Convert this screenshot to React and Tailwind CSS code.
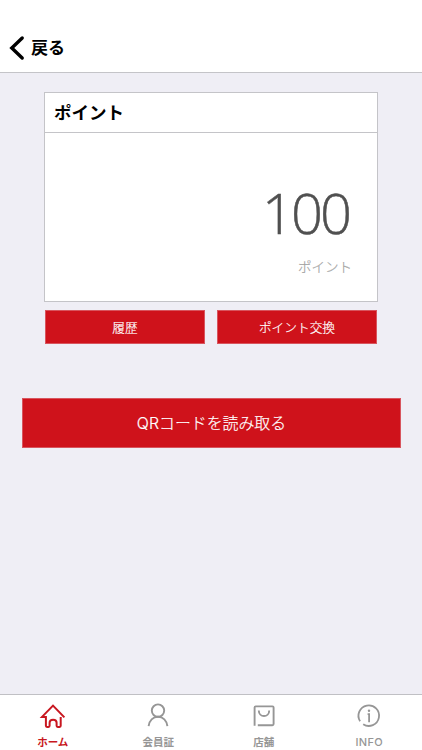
const tabs = [
  { label: "ホーム", Icon: HomeIcon, active: true },
  { label: "会員証", Icon: MemberIcon },
  { label: "店舗", Icon: ShopIcon },
  { label: "INFO", Icon: InfoIcon },
];

function HomeIcon() {
  return (
    <svg className="w-[28px] h-[28px]" viewBox="0 0 28 28" fill="none" stroke="currentColor" strokeWidth="2">
      <path d="M25.4 15.4L14 3.6L3 14.9H6.9V23.8Q6.9 24.9 8 24.9H9.5Q10.6 24.9 10.6 23.8V20.8C10.6 16.8 17.6 16.8 17.6 20.8V23.8Q17.6 24.9 18.7 24.9H20.6Q21.7 24.9 21.7 23.8V15" />
    </svg>
  );
}

function MemberIcon() {
  return (
    <svg className="w-[28px] h-[28px]" viewBox="0 0 28 28" fill="none" stroke="currentColor" strokeWidth="1.9">
      <circle cx="14" cy="8.6" r="6.2" />
      <path d="M4.6 24.2C5.2 18.5 9 14.8 14 14.8S22.8 18.5 23.4 24.2" />
    </svg>
  );
}

function ShopIcon() {
  return (
    <svg className="w-[28px] h-[28px]" viewBox="0 0 28 28" fill="none" stroke="currentColor" strokeWidth="1.9">
      <path d="M4.6 23.8V5.6Q4.6 4.4 5.8 4.4H22.4Q23.6 4.4 23.6 5.6V22Q23.6 23.2 22.4 23.2H7.8" />
      <path d="M8.8 8.4C8.8 15.9 19.2 15.9 19.2 8.4" />
    </svg>
  );
}

function InfoIcon() {
  return (
    <svg className="w-[28px] h-[28px]" viewBox="0 0 28 28" fill="none" stroke="currentColor" strokeWidth="1.8">
      <path d="M5.1 19.2A10.3 10.3 0 1 1 8.2 22.3" />
      <path d="M12.6 12.2H14.1V20.2" />
      <circle cx="14" cy="8.8" r="1.2" fill="currentColor" stroke="none" />
    </svg>
  );
}

function App() {
  return (
    <div className="w-full h-screen bg-[#efeef5] flex flex-col overflow-hidden font-['Inter','Noto_Sans_CJK_JP',sans-serif]">
      {/* Header */}
      <header className="h-[73px] shrink-0 bg-white border-b border-[#c4c4c8] flex items-end pl-[9px] pb-[11px]">
        <button className="flex items-center">
          <svg className="w-[16px] h-[26px]" viewBox="0 0 16 26" fill="none" stroke="#000" strokeWidth="3.4" strokeLinecap="round">
            <path d="M13.2 3L2.8 13L13.2 23" />
          </svg>
          <span className="ml-[6px] text-[17px] leading-[26px] font-bold text-black">戻る</span>
        </button>
      </header>

      <main className="flex-1 pt-[19px]">
        {/* Point card */}
        <section className="ml-[44px] w-[334px] h-[210px] bg-white border border-[#c4c4c8]">
          <h1 className="h-[40px] pl-[9px] border-b border-[#c4c4c8] text-[17.5px] leading-[40px] font-bold text-black">
            ポイント
          </h1>
          <div className="flex flex-col items-end pr-[25px] pt-[49px]">
            <p className="mr-[3px] font-['Open_Sans',sans-serif] font-light text-[56px] leading-[60px] tracking-[-3px] text-[#505050] [-webkit-text-stroke:0.5px_#505050]">
              100
            </p>
            <p className="mt-[15px] text-[13.5px] leading-[20px] text-[#a2a2a2] font-light [-webkit-text-stroke:0.2px]">ポイント</p>
          </div>
        </section>

        <div className="ml-[45px] mt-[8px] flex gap-[12px] text-[12.7px] font-light text-white [-webkit-text-stroke:0.2px]">
          <button className="w-[160px] h-[34px] pt-px bg-[#cf121b] border border-[#d8555e]">履歴</button>
          <button className="w-[160px] h-[34px] pt-px bg-[#cf121b] border border-[#d8555e]">ポイント交換</button>
        </div>

        <button className="ml-[22px] mt-[54px] w-[379px] h-[50px] pt-px bg-[#cf121b] border border-[#d8555e] text-[15.9px] font-light text-white [-webkit-text-stroke:0.2px]">
          QRコードを読み取る
        </button>
      </main>

      {/* Tab bar */}
      <nav className="h-[56px] shrink-0 bg-white border-t border-[#c0c0c4] grid grid-cols-4">
        {tabs.map(({ label, Icon, active }) => (
          <button
            key={label}
            className={`flex flex-col items-center pt-[7px] ${active ? "text-[#c81720]" : "text-[#969696]"}`}
          >
            <Icon />
            <span
              className={
                label === "INFO"
                  ? "mt-[3px] text-[11px] leading-[18px] font-medium tracking-[0.3px]"
                  : "mt-[4px] text-[10.5px] leading-[18px] font-bold"
              }
            >
              {label}
            </span>
          </button>
        ))}
      </nav>
    </div>
  );
}

export default App;
